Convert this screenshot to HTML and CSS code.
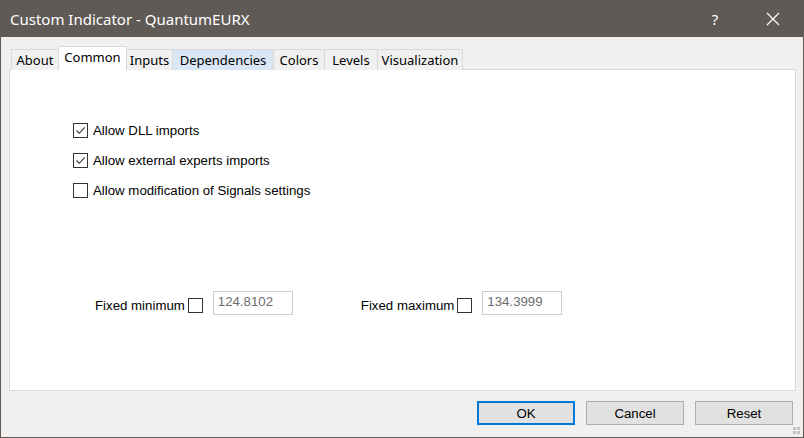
FILE: index.html
```html
<!DOCTYPE html>
<html lang="en">

<head>
    <meta charset="UTF-8">
    <title>Custom Indicator - QuantumEURX</title>
    <link rel="stylesheet" href="styles.css">
</head>

<body>
<div class="window">
    <div class="titlebar">
        <span class="title">Custom Indicator - QuantumEURX</span>
        <span class="help">?</span>
        <span class="close">
            <svg width="14" height="14" viewBox="0 0 14 14">
                <path d="M1 1 L13 13 M13 1 L1 13" stroke="#fff" stroke-width="1.2" fill="none"/>
            </svg>
        </span>
    </div>

    <div class="tabs">
        <div class="tab tab-about">About</div>
        <div class="tab tab-common active">Common</div>
        <div class="tab tab-inputs">Inputs</div>
        <div class="tab tab-deps hover">Dependencies</div>
        <div class="tab tab-colors">Colors</div>
        <div class="tab tab-levels">Levels</div>
        <div class="tab tab-visual">Visualization</div>
    </div>

    <div class="panel">
        <div class="checks">
            <label class="check">
                <span class="box">
                    <svg width="11" height="11" viewBox="0 0 11 11">
                        <path d="M1.5 5.5 L4.2 8.3 L9.8 2.4" stroke="#333" stroke-width="1.1" fill="none"/>
                    </svg>
                </span>
                Allow DLL imports
            </label>
            <label class="check">
                <span class="box">
                    <svg width="11" height="11" viewBox="0 0 11 11">
                        <path d="M1.5 5.5 L4.2 8.3 L9.8 2.4" stroke="#333" stroke-width="1.1" fill="none"/>
                    </svg>
                </span>
                Allow external experts imports
            </label>
            <label class="check">
                <span class="box"></span>
                Allow modification of Signals settings
            </label>
        </div>

        <div class="fixed-row">
            <div class="fixed">
                <span class="fixed-label">Fixed minimum</span>
                <span class="box small"></span>
                <span class="edit">124.8102</span>
            </div>
            <div class="fixed">
                <span class="fixed-label">Fixed maximum</span>
                <span class="box small"></span>
                <span class="edit">134.3999</span>
            </div>
        </div>
    </div>

    <div class="buttons">
        <button type="button" class="btn default">OK</button>
        <button type="button" class="btn">Cancel</button>
        <button type="button" class="btn">Reset</button>
    </div>

    <div class="grip">
        <i></i><i></i><i></i><i></i>
    </div>
</div>
</body>

</html>
```

FILE: styles.css
```css
html,
body {
    margin: 0;
    padding: 0;
    font-family: "Liberation Sans", Arial, sans-serif;
}

.window {
    position: relative;
    width: 804px;
    height: 438px;
    box-sizing: border-box;
    border: 1px solid #5f5a56;
    border-top: 0;
    background: #f0f0f0;
    display: flex;
    flex-direction: column;
}

.titlebar {
    height: 37px;
    flex: none;
    background: #5f5a56;
    color: #fff;
    display: flex;
    align-items: center;
    padding-left: 9px;
}

.title {
    flex: 1;
    font-family: "Noto Sans", "Open Sans", sans-serif;
    font-size: 15px;
}

.help {
    width: 20px;
    margin-right: 41px;
    font-family: "Noto Sans", sans-serif;
    font-size: 15px;
    text-align: center;
}

.close {
    width: 14px;
    height: 14px;
    margin-right: 23px;
}

.close svg {
    display: block;
}

.tabs {
    display: flex;
    align-items: flex-end;
    height: 24px;
    margin-top: 9px;
    padding-left: 10px;
    margin-bottom: -1px;
    position: relative;
    z-index: 1;
}

.tab {
    height: 21px;
    box-sizing: border-box;
    border: 1px solid #d9d9d9;
    border-left: 0;
    border-bottom: 0;
    font-family: "Noto Sans", "Open Sans", sans-serif;
    font-size: 13px;
    line-height: 21px;
    text-align: center;
    white-space: nowrap;
    color: #000;
    background: #f0f0f0;
}

.tab:first-child {
    border-left: 1px solid #d9d9d9;
}

.tab.active {
    height: 24px;
    background: #fff;
    border-left: 1px solid #d9d9d9;
    margin-left: -1px;
    line-height: 20px;
}

.tab.hover {
    background: #d8e6f5;
}

.tab-about { width: 48px; }
.tab-common { width: 69px; }
.tab-inputs { width: 46px; }
.tab-deps { width: 101px; }
.tab-colors { width: 51px; }
.tab-levels { width: 53px; }
.tab-visual { width: 85px; }

.panel {
    height: 322px;
    box-sizing: border-box;
    margin: 0 7px 0 8px;
    border: 1px solid #d9d9d9;
    background: #fff;
    font-size: 13.25px;
}

.checks {
    display: flex;
    flex-direction: column;
    gap: 10px;
    padding: 50px 0 0 63px;
}

.check {
    display: flex;
    align-items: center;
    height: 20px;
    color: #000;
}

.box {
    width: 13px;
    height: 13px;
    border: 1px solid #333;
    background: #fff;
    margin-right: 5px;
    display: flex;
    align-items: center;
    justify-content: center;
    flex: none;
}

.fixed-row {
    display: flex;
    gap: 68px;
    margin-top: 91px;
    padding-left: 85px;
}

.fixed {
    display: flex;
    align-items: center;
    height: 24px;
}

.fixed-label {
    padding-top: 5px;
    margin-right: 3px;
}

.box.small {
    margin-top: 5px;
    margin-right: 10px;
}

.edit {
    width: 80px;
    height: 24px;
    box-sizing: border-box;
    border: 1px solid #cccccc;
    padding: 2px 0 0 4px;
    color: #6d6d6d;
    align-self: flex-start;
}

.buttons {
    display: flex;
    justify-content: flex-end;
    gap: 11px;
    margin: 10px 10px 0 0;
}

.btn {
    width: 98px;
    height: 24px;
    box-sizing: border-box;
    border: 1px solid #adadad;
    background: #e1e1e1;
    padding: 0;
    font-family: "Liberation Sans", Arial, sans-serif;
    font-size: 13.25px;
    color: #000;
}

.btn.default {
    border: 2px solid #0078d7;
}

.grip {
    position: absolute;
    right: 3px;
    bottom: 3px;
    display: grid;
    grid-template-columns: 3px 3px;
    gap: 1px;
}

.grip i {
    width: 3px;
    height: 3px;
    background: #c2c2c2;
}
```
